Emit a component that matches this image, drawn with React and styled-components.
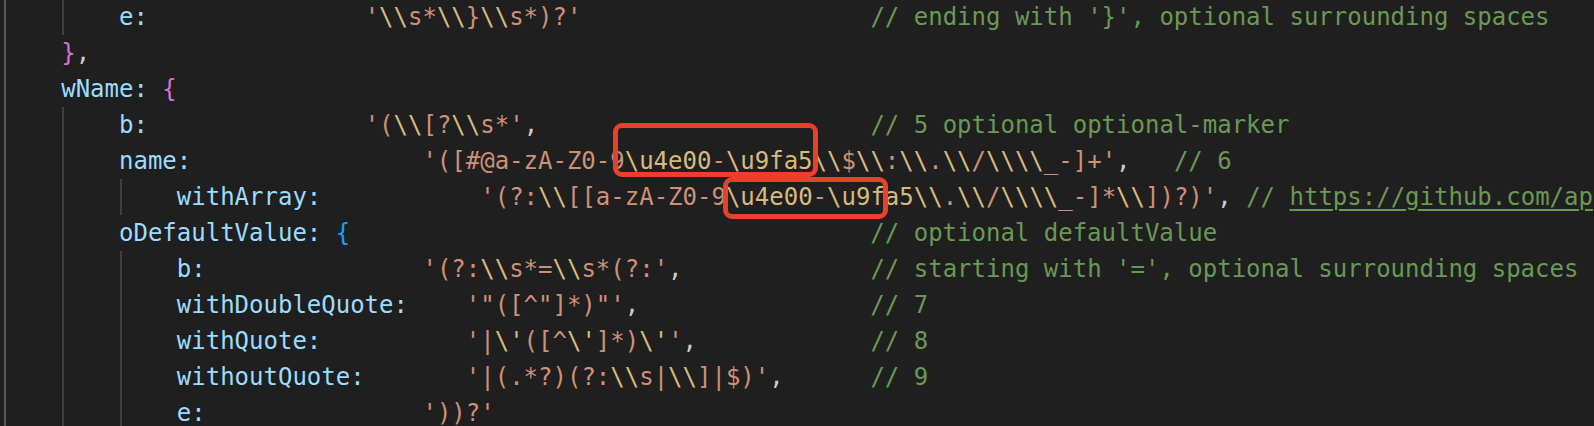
import React from "react";
import styled, { createGlobalStyle } from "styled-components";

const GlobalStyle = createGlobalStyle`
  html, body {
    margin: 0;
    padding: 0;
    background: #1f1f1f;
  }
`;

const colors = {
  key: "#9cdcfe",
  str: "#ce9178",
  esc: "#d7ba7d",
  com: "#6a9955",
  link: "#6a9955",
  punc: "#cccccc",
  plain: "#cccccc",
  b1: "#da70d6",
  b2: "#179fff",
};

const Editor = styled.div`
  position: relative;
  width: 100%;
  height: 426px;
  overflow: hidden;
  background: #1f1f1f;
`;

const Code = styled.div`
  margin-top: -1.5px;
  padding-left: 3.4px;
  font-family: "DejaVu Sans Mono", "Liberation Mono", monospace;
  font-size: 24px;
  line-height: 36px;
  white-space: pre;
`;

const Line = styled.div`
  display: flex;
  height: 36px;
`;

const Indent = styled.span`
  display: inline-block;
  flex: none;
  width: 4ch;
  height: 36px;
  background-image: linear-gradient(
    ${(p) => p.$color},
    ${(p) => p.$color}
  );
  background-size: 2px 100%;
  background-position: 1px 0;
  background-repeat: no-repeat;
`;

const Text = styled.span`
  flex: none;
`;

const Token = styled.span`
  color: ${(p) => colors[p.$kind]};
  text-decoration: ${(p) => (p.$kind === "link" ? "underline" : "none")};
  text-underline-offset: 4px;
  text-decoration-thickness: 2px;
`;

const Highlight = styled.div`
  position: absolute;
  box-sizing: border-box;
  top: ${(p) => p.$top}px;
  left: ${(p) => p.$left}px;
  width: ${(p) => p.$width}px;
  height: ${(p) => p.$height}px;
  border: 5px solid #e8402b;
  border-radius: 9px;
  pointer-events: none;
`;

const R = String.raw;

const lines = [
  {
    guides: 2,
    parts: [
      { col: 8, t: [["key", "e:"]] },
      { col: 25, t: [["str", R`'\\s*\\}\\s*)?'`]] },
      { col: 60, t: [["com", "// ending with '}', optional surrounding spaces"]] },
    ],
  },
  { guides: 1, parts: [{ col: 4, t: [["b1", "}"], ["punc", ","]] }] },
  {
    guides: 1,
    parts: [{ col: 4, t: [["key", "wName:"], ["plain", " "], ["b1", "{"]] }],
  },
  {
    guides: 2,
    parts: [
      { col: 8, t: [["key", "b:"]] },
      { col: 25, t: [["str", R`'(\\[?\\s*'`], ["punc", ","]] },
      { col: 60, t: [["com", "// 5 optional optional-marker"]] },
    ],
  },
  {
    guides: 2,
    parts: [
      { col: 8, t: [["key", "name:"]] },
      {
        col: 29,
        t: [
          ["str", R`'([#@a-zA-Z0-9\u4e00-\u9fa5\\$\\:\\.\\/\\\\_-]+'`],
          ["punc", ","],
        ],
      },
      { col: 81, t: [["com", "// 6"]] },
    ],
  },
  {
    guides: 3,
    parts: [
      { col: 12, t: [["key", "withArray:"]] },
      {
        col: 33,
        t: [
          ["str", R`'(?:\\[[a-zA-Z0-9\u4e00-\u9fa5\\.\\/\\\\_-]*\\])?)'`],
          ["punc", ","],
        ],
      },
      { col: 86, t: [["com", "// "], ["link", "https://github.com/ap"]] },
    ],
  },
  {
    guides: 2,
    parts: [
      { col: 8, t: [["key", "oDefaultValue:"], ["plain", " "], ["b2", "{"]] },
      { col: 60, t: [["com", "// optional defaultValue"]] },
    ],
  },
  {
    guides: 3,
    parts: [
      { col: 12, t: [["key", "b:"]] },
      { col: 29, t: [["str", R`'(?:\\s*=\\s*(?:'`], ["punc", ","]] },
      { col: 60, t: [["com", "// starting with '=', optional surrounding spaces"]] },
    ],
  },
  {
    guides: 3,
    parts: [
      { col: 12, t: [["key", "withDoubleQuote:"]] },
      { col: 32, t: [["str", `'"([^"]*)"'`], ["punc", ","]] },
      { col: 60, t: [["com", "// 7"]] },
    ],
  },
  {
    guides: 3,
    parts: [
      { col: 12, t: [["key", "withQuote:"]] },
      { col: 32, t: [["str", R`'|\'([^\']*)\''`], ["punc", ","]] },
      { col: 60, t: [["com", "// 8"]] },
    ],
  },
  {
    guides: 3,
    parts: [
      { col: 12, t: [["key", "withoutQuote:"]] },
      { col: 32, t: [["str", R`'|(.*?)(?:\\s|\\]|$)'`], ["punc", ","]] },
      { col: 60, t: [["com", "// 9"]] },
    ],
  },
  {
    guides: 3,
    parts: [
      { col: 12, t: [["key", "e:"]] },
      { col: 29, t: [["str", `'))?'`]] },
    ],
  },
];

// split a string literal into plain parts and escape sequences
const splitString = (text) =>
  text
    .split(/(\\u[0-9a-fA-F]{4}|\\.)/)
    .filter(Boolean)
    .map((s) => [s.startsWith("\\") ? "esc" : "str", s]);

const buildTokens = (guides, parts) => {
  const out = [];
  let col = guides * 4;
  parts.forEach((part) => {
    if (part.col > col) {
      out.push(["plain", " ".repeat(part.col - col)]);
      col = part.col;
    }
    part.t.forEach(([kind, text]) => {
      if (kind === "str") out.push(...splitString(text));
      else out.push([kind, text]);
      col += text.length;
    });
  });
  return out;
};

const CodeLine = ({ guides, parts }) => (
  <Line>
    {Array.from({ length: guides }).map((_, i) => (
      <Indent key={i} $color={i === 0 ? "#5a5a5a" : "#404040"} />
    ))}
    <Text>
      {buildTokens(guides, parts).map(([kind, text], i) => (
        <Token key={i} $kind={kind}>
          {text}
        </Token>
      ))}
    </Text>
  </Line>
);

export default function App() {
  return (
    <>
      <GlobalStyle />
      <Editor>
        <Code>
          {lines.map((l, i) => (
            <CodeLine key={i} {...l} />
          ))}
        </Code>
        <Highlight $top={123} $left={613} $width={205} $height={54} />
        <Highlight $top={177} $left={723} $width={165} $height={42} />
      </Editor>
    </>
  );
}
